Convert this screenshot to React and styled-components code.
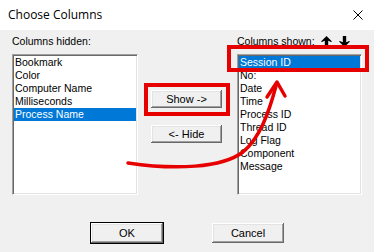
import React from 'react'
import styled, { createGlobalStyle } from 'styled-components'

const GlobalStyle = createGlobalStyle`
    html, body {
        margin: 0;
        padding: 0;
        background: #f0f0f0;
    }
    * {
        box-sizing: border-box;
    }
`;

const hidden = ['Bookmark', 'Color', 'Computer Name', 'Milliseconds', 'Process Name'];
const shown = ['Session ID', 'No:', 'Date', 'Time', 'Process ID', 'Thread ID', 'Log Flag', 'Component', 'Message'];

const ArrowIcon = ({ down }) => (
    <svg width="11" height="11" viewBox="0 0 11 11" style={{ transform: down ? 'rotate(180deg)' : 'none' }}>
        <path d="M5.5 0 L11 5.5 L10 6 Q8.5 5.2 7.2 4.8 L7.2 11 L3.8 11 L3.8 4.8 Q2.5 5.2 1 6 L0 5.5 Z" fill="#000" />
    </svg>
);

const App = () => {
    return (
        <>
            <GlobalStyle />
            <Window>
                <TitleBar>
                    <Title>Choose Columns</Title>
                    <CloseButton>
                        <svg width="10" height="10" viewBox="0 0 10 10">
                            <path d="M0.5 0.5 L9.5 9.5 M9.5 0.5 L0.5 9.5" stroke="#000" strokeWidth="1" />
                        </svg>
                    </CloseButton>
                </TitleBar>
                <Body>
                    <Columns>
                        <Column width={126}>
                            <LabelRow>
                                <Label>Columns hidden:</Label>
                            </LabelRow>
                            <ListBox>
                                {hidden.map((name) => (
                                    <Item key={name} selected={name === 'Process Name'}>{name}</Item>
                                ))}
                            </ListBox>
                        </Column>
                        <Middle>
                            <Button>Show -&gt;</Button>
                            <Button>&lt;- Hide</Button>
                        </Middle>
                        <Column width={125}>
                            <LabelRow>
                                <Label>Columns shown:</Label>
                                <Arrows>
                                    <ArrowIcon />
                                    <ArrowIcon down />
                                </Arrows>
                            </LabelRow>
                            <ListBox>
                                {shown.map((name) => (
                                    <Item key={name} selected={name === 'Session ID'}>{name}</Item>
                                ))}
                            </ListBox>
                        </Column>
                    </Columns>
                    <Footer>
                        <Button primary wide>OK</Button>
                        <Button wide>Cancel</Button>
                    </Footer>
                </Body>
                <RedBox style={{ left: 227, top: 45, width: 142, height: 27 }} />
                <RedBox style={{ left: 144, top: 83, width: 86, height: 33 }} />
                <Annotation width="374" height="252" viewBox="0 0 374 252">
                    <path d="M128 163 C175 170 222 168 243 152 C260 138 269 112 276 86"
                        fill="none" stroke="#e60000" strokeWidth="3.5" strokeLinecap="round" />
                    <path d="M267 97 L277 82 L285 96" fill="none" stroke="#e60000"
                        strokeWidth="3.5" strokeLinecap="round" strokeLinejoin="round" />
                </Annotation>
            </Window>
        </>
    )
}

const Window = styled.div`
    position: relative;
    width: 374px;
    height: 252px;
    background: #f0f0f0;
    font-family: 'Liberation Sans', Arial, sans-serif;
    font-size: 10.5px;
    color: #000;
    overflow: hidden;
`;

const TitleBar = styled.div`
    height: 30px;
    background: #fff;
    display: flex;
    align-items: center;
    justify-content: space-between;
    padding: 0 11px 0 8px;
`;

const Title = styled.div`
    font-family: 'Open Sans', 'Noto Sans', sans-serif;
    font-size: 12px;
    color: #000;
    padding-bottom: 1px;
`;

const CloseButton = styled.div`
    width: 10px;
    height: 10px;
    display: flex;
`;

const Body = styled.div`
    padding: 0 12px;
`;

const Columns = styled.div`
    display: flex;
`;

const Column = styled.div`
    width: ${(p) => p.width}px;
    display: flex;
    flex-direction: column;
`;

const LabelRow = styled.div`
    display: flex;
    align-items: center;
    height: 13px;
    margin: 5px 0 6px;
    white-space: nowrap;
`;

const Label = styled.span`
    line-height: 13px;
`;

const Arrows = styled.div`
    display: flex;
    gap: 7px;
    margin-left: 6px;
    margin-top: -1px;
`;

const ListBox = styled.div`
    height: 141px;
    background: #fff;
    border-top: 1px solid #a0a0a0;
    border-left: 1px solid #a0a0a0;
    border-bottom: 1px solid #fff;
    border-right: 1px solid #fff;
    box-shadow: inset 1px 1px 0 #696969, inset -1px -1px 0 #e3e3e3;
    padding: 1px;
`;

const Item = styled.div`
    height: 13px;
    line-height: 13px;
    padding-left: 1px;
    white-space: nowrap;
    background: ${(p) => (p.selected ? '#0078d7' : 'transparent')};
    color: ${(p) => (p.selected ? '#fff' : '#000')};
`;

const Middle = styled.div`
    width: 99px;
    padding: 59px 0 0 12px;
    display: flex;
    flex-direction: column;
    gap: 15px;
`;

const Button = styled.div`
    width: ${(p) => (p.wide ? 74 : 73)}px;
    height: ${(p) => (p.wide ? 22 : 20)}px;
    display: flex;
    align-items: center;
    justify-content: center;
    background: #f0f0f0;
    font-size: 11px;
    border: 1px solid ${(p) => (p.primary ? '#000' : 'transparent')};
    box-shadow: inset -1px -1px 0 #696969, inset 1px 1px 0 #fff,
        inset -2px -2px 0 #a0a0a0, inset 2px 2px 0 #e3e3e3;
`;

const Footer = styled.div`
    display: flex;
    justify-content: center;
    gap: 47px;
    margin-top: 27px;
    padding-left: 1px;
`;

const RedBox = styled.div`
    position: absolute;
    border: 4px solid #e60000;
    pointer-events: none;
`;

const Annotation = styled.svg`
    position: absolute;
    left: 0;
    top: 0;
    pointer-events: none;
`;

export default App
